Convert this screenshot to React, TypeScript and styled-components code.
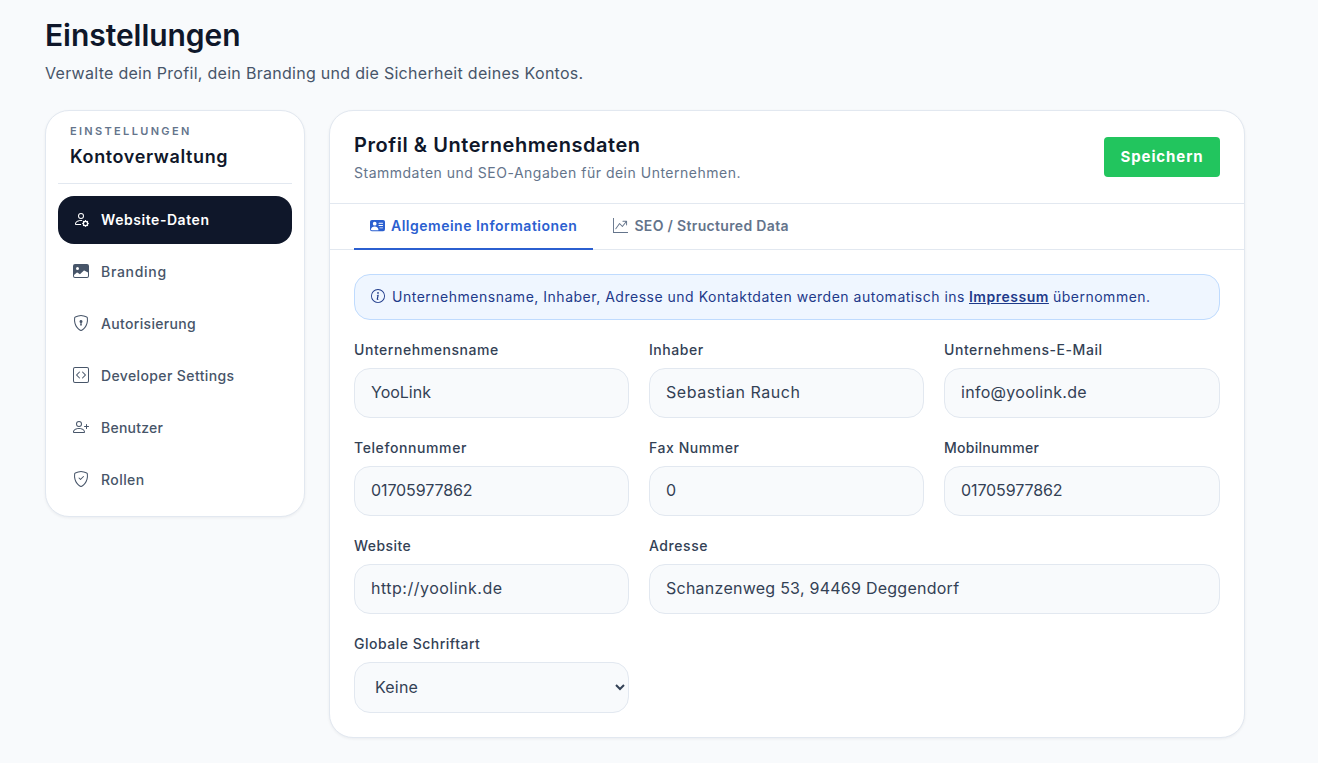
import React from "react";
import styled, { createGlobalStyle } from "styled-components";
import {
  BsPersonGear,
  BsImageFill,
  BsShieldLock,
  BsCodeSquare,
  BsPersonPlus,
  BsShieldCheck,
  BsPersonVcardFill,
  BsGraphUpArrow,
  BsInfoCircle,
} from "react-icons/bs";

const Global = createGlobalStyle`
  * { box-sizing: border-box; }
  html, body { margin: 0; padding: 0; background: #f8fafc; }
  body { font-family: Inter, "Liberation Sans", sans-serif; color: #0f172a; }
`;

const Page = styled.div`
  width: 1318px;
  height: 763px;
  overflow: hidden;
  padding: 16px 73px 0 45px;
`;
const Title = styled.h1`
  margin: 0;
  font-size: 30px;
  line-height: 38px;
  font-weight: 600;
  letter-spacing: -0.05px;
  color: #0f172a;
`;
const Subtitle = styled.p`
  margin: 10px 0 0;
  font-size: 16px;
  line-height: 19px;
  color: #475569;
  letter-spacing: 0.29px;
`;
const Layout = styled.div`
  display: grid;
  grid-template-columns: 260px 916px;
  gap: 24px;
  align-items: start;
  margin-top: 27px;
`;
const Sidebar = styled.aside`
  background: #fff;
  border: 1px solid #e2e8f0;
  border-radius: 24px;
  padding: 12px;
  height: 407px;
  box-shadow: 0 1px 3px rgba(15, 23, 42, 0.06);
`;
const SideHead = styled.div`
  padding: 0 12px 12px;
  border-bottom: 1px solid #e2e8f0;
  height: 61px;
`;
const Eyebrow = styled.div`
  font-size: 11px;
  line-height: 16px;
  font-weight: 600;
  letter-spacing: 2.33px;
  color: #64748b;
`;
const SideTitle = styled.div`
  font-size: 18px;
  line-height: 24px;
  font-weight: 600;
  letter-spacing: 0.62px;
  margin-top: 6px;
  color: #0f172a;
`;
const Nav = styled.nav`
  display: flex;
  flex-direction: column;
  gap: 4px;
  margin-top: 12px;
`;
const NavItem = styled.div<{ $active?: boolean; $track: number }>`
  display: flex;
  align-items: center;
  gap: 12px;
  height: 48px;
  padding: 0 15px 2px;
  border-radius: 16px;
  font-size: 14px;
  font-weight: ${(p) => (p.$active ? 600 : 500)};
  letter-spacing: ${(p) => p.$track}px;
  background: ${(p) => (p.$active ? "#0f172a" : "transparent")};
  color: ${(p) => (p.$active ? "#fff" : "#475569")};
  svg { width: 16px; height: 16px; flex: none; }
`;
const Main = styled.main`
  background: #fff;
  border: 1px solid #e2e8f0;
  border-radius: 24px;
  height: 628px;
  box-shadow: 0 1px 3px rgba(15, 23, 42, 0.06);
`;
const MainHead = styled.header`
  display: flex;
  align-items: center;
  justify-content: space-between;
  height: 93px;
  padding: 0 24px;
  border-bottom: 1px solid #e2e8f0;
`;
const MainTitle = styled.h2`
  margin: 0;
  font-size: 20px;
  line-height: 25px;
  font-weight: 600;
  letter-spacing: 0.55px;
  color: #0f172a;
`;
const MainSub = styled.p`
  margin: 6px 0 0;
  font-size: 14px;
  line-height: 18px;
  color: #64748b;
  letter-spacing: 0.5px;
`;
const SaveButton = styled.button`
  width: 116px;
  height: 40px;
  border: 0;
  border-radius: 4px;
  padding: 0 0 2px;
  background: #22c55e;
  color: #fff;
  font: 700 15px Inter, sans-serif;
  letter-spacing: 0.9px;
`;
const Tabs = styled.div`
  display: flex;
  gap: 4px;
  padding: 0 24px;
  height: 46px;
  border-bottom: 1px solid #e2e8f0;
`;
const Tab = styled.div<{ $active?: boolean; $track: number }>`
  display: flex;
  align-items: center;
  gap: 6px;
  height: 46px;
  padding: 0 16px 2px;
  font-size: 14px;
  font-weight: 600;
  letter-spacing: ${(p) => p.$track}px;
  color: ${(p) => (p.$active ? "#2b5fd0" : "#64748b")};
  border-bottom: 2px solid ${(p) => (p.$active ? "#2b5fd0" : "transparent")};
  svg { width: 15px; height: 15px; flex: none; }
`;
const Content = styled.div`
  padding: 24px;
`;
const Notice = styled.div`
  display: flex;
  align-items: center;
  gap: 7px;
  height: 46px;
  padding: 0 16px 2px;
  border: 1px solid #bfdbfe;
  border-radius: 16px;
  background: #eff6ff;
  color: #1e3a8a;
  font-size: 14px;
  letter-spacing: 0.51px;
  svg { width: 14px; height: 14px; flex: none; }
  a { color: #1e3a8a; font-weight: 600; text-decoration: underline; margin: 0 4px; }
`;
const FormGrid = styled.div`
  display: grid;
  grid-template-columns: 275px 275px 1fr;
  column-gap: 20px;
  row-gap: 20px;
  margin-top: 20px;
`;
const Field = styled.label<{ $span?: number }>`
  display: block;
  grid-column: span ${(p) => p.$span ?? 1};
`;
const FieldLabel = styled.div<{ $track: number }>`
  font-size: 14px;
  line-height: 20px;
  height: 20px;
  font-weight: 500;
  letter-spacing: ${(p) => p.$track}px;
  color: #334155;
  margin-bottom: 8px;
`;
const Input = styled.input<{ $track: number }>`
  display: block;
  width: 100%;
  height: 50px;
  padding: 0 16px 2px;
  border: 1px solid #e2e8f0;
  border-radius: 16px;
  background: #f8fafc;
  color: #334155;
  font: 400 16px Inter, sans-serif;
  letter-spacing: ${(p) => p.$track}px;
  outline: none;
`;
const Select = styled.select`
  display: block;
  width: 100%;
  height: 51px;
  padding: 0 16px 2px;
  border: 1px solid #e2e8f0;
  border-radius: 16px;
  background: #f8fafc;
  color: #334155;
  font: 400 16px Inter, sans-serif;
  letter-spacing: 0.2px;
  outline: none;
`;

const nav = [
  { icon: <BsPersonGear />, label: "Website-Daten", active: true, track: 0.55 },
  { icon: <BsImageFill />, label: "Branding", track: 0.7 },
  { icon: <BsShieldLock />, label: "Autorisierung", track: 0.33 },
  { icon: <BsCodeSquare />, label: "Developer Settings", track: 0.38 },
  { icon: <BsPersonPlus />, label: "Benutzer", track: 0.25 },
  { icon: <BsShieldCheck />, label: "Rollen", track: 0.43 },
];

const fields = [
  { label: "Unternehmensname", labelTrack: 0.55, value: "YooLink", track: 0 },
  { label: "Inhaber", labelTrack: 0.55, value: "Sebastian Rauch", track: 0.55 },
  { label: "Unternehmens-E-Mail", labelTrack: 0.55, value: "info@yoolink.de", track: 0.3 },
  { label: "Telefonnummer", labelTrack: 0.6, value: "01705977862", track: -0.1 },
  { label: "Fax Nummer", labelTrack: 0.55, value: "0", track: 0 },
  { label: "Mobilnummer", labelTrack: 0.25, value: "01705977862", track: -0.1 },
  { label: "Website", labelTrack: 0.45, value: "http://yoolink.de", track: 0.5 },
  { label: "Adresse", labelTrack: 0.55, value: "Schanzenweg 53, 94469 Deggendorf", span: 2, track: 0.25 },
];

export default function App() {
  return (
    <Page>
      <Global />
      <Title>Einstellungen</Title>
      <Subtitle>Verwalte dein Profil, dein Branding und die Sicherheit deines Kontos.</Subtitle>
      <Layout>
        <Sidebar>
          <SideHead>
            <Eyebrow>EINSTELLUNGEN</Eyebrow>
            <SideTitle>Kontoverwaltung</SideTitle>
          </SideHead>
          <Nav>
            {nav.map((n) => (
              <NavItem key={n.label} $active={n.active} $track={n.track}>
                {n.icon}
                {n.label}
              </NavItem>
            ))}
          </Nav>
        </Sidebar>
        <Main>
          <MainHead>
            <div>
              <MainTitle>Profil &amp; Unternehmensdaten</MainTitle>
              <MainSub>Stammdaten und SEO-Angaben für dein Unternehmen.</MainSub>
            </div>
            <SaveButton>Speichern</SaveButton>
          </MainHead>
          <Tabs>
            <Tab $active $track={0.5}>
              <BsPersonVcardFill />
              Allgemeine Informationen
            </Tab>
            <Tab $track={0.33}>
              <BsGraphUpArrow />
              SEO / Structured Data
            </Tab>
          </Tabs>
          <Content>
            <Notice>
              <BsInfoCircle />
              <span>
                Unternehmensname, Inhaber, Adresse und Kontaktdaten werden automatisch ins
                <a>Impressum</a>übernommen.
              </span>
            </Notice>
            <FormGrid>
              {fields.map((f) => (
                <Field key={f.label} $span={f.span}>
                  <FieldLabel $track={f.labelTrack}>{f.label}</FieldLabel>
                  <Input defaultValue={f.value} $track={f.track} />
                </Field>
              ))}
              <Field>
                <FieldLabel $track={0.5}>Globale Schriftart</FieldLabel>
                <Select defaultValue="Keine">
                  <option>Keine</option>
                </Select>
              </Field>
            </FormGrid>
          </Content>
        </Main>
      </Layout>
    </Page>
  );
}
